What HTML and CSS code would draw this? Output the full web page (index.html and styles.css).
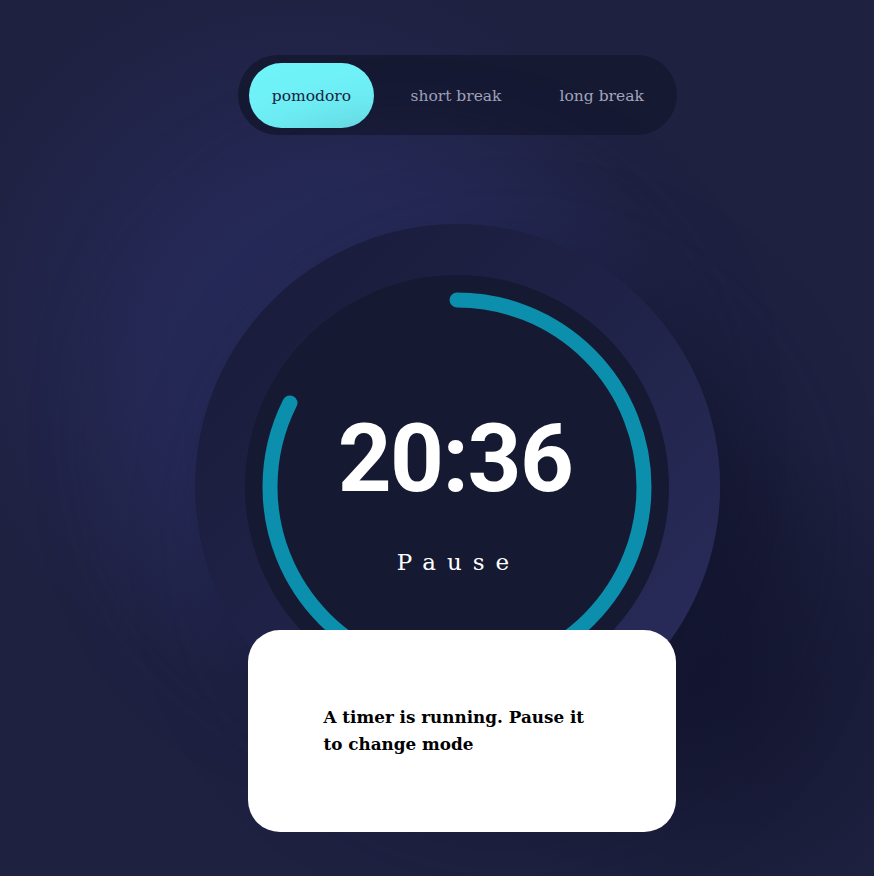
FILE: index.html
```html
<!DOCTYPE html>
<html lang="en">
<head>
<meta charset="utf-8">
<title>pomodoro</title>
<link rel="stylesheet" href="styles.css">
</head>
<body>
<main class="app">
  <nav class="tabs">
    <span class="tab tab-active">pomodoro</span>
    <span class="tab">short break</span>
    <span class="tab">long break</span>
  </nav>
  <section class="timer">
    <div class="timer-inner">
      <svg class="ring" width="424" height="424" viewBox="0 0 424 424">
        <circle cx="212" cy="212" r="187" fill="none" stroke="#0b8fad" stroke-width="15" stroke-linecap="round" stroke-dasharray="968 1175" transform="rotate(-90 212 212)"/>
      </svg>
      <div class="time">20:36</div>
      <div class="action">Pause</div>
    </div>
    <div class="toast">
      <p class="toast-text">A timer is running. Pause it<br>to change mode</p>
    </div>
  </section>
</main>
</body>
</html>
```
FILE: styles.css
```css
html, body {
  margin: 0;
  height: 100%;
}
body {
  background:
    radial-gradient(circle at 34% 37%, rgba(41, 45, 96, 1) 0, rgba(41, 45, 96, 0) 360px),
    radial-gradient(circle at 82% 78%, rgba(20, 22, 48, 1) 0, rgba(20, 22, 48, 0) 260px),
    #1e2140;
  font-family: "DejaVu Serif", serif;
  overflow: hidden;
}
.app {
  display: flex;
  flex-direction: column;
  align-items: center;
  padding-left: 40px;
  padding-top: 55px;
}
.tabs {
  display: flex;
  align-items: center;
  height: 80px;
  box-sizing: border-box;
  width: 439px;
  padding: 0 11px;
  background: #161932;
  border-radius: 40px;
}
.tab {
  display: flex;
  align-items: center;
  justify-content: center;
  font-family: "DejaVu Serif", serif;
  font-size: 15.5px;
  color: #a3a5bd;
  height: 65px;
  border-radius: 33px;
  padding-top: 2px;
  box-sizing: border-box;
  cursor: pointer;
}
.tab:nth-child(1) { width: 126px; }
.tab:nth-child(2) { width: 164px; }
.tab:nth-child(3) { width: 128px; }
.tab-active {
  background: #70f3f8;
  color: #1e213f;
}
.timer {
  position: relative;
  margin-top: 89px;
  width: 525px;
  height: 525px;
  border-radius: 50%;
  background: linear-gradient(135deg, #181a38 0%, #1f2246 45%, #2b2e5e 100%);
  box-shadow: 50px 50px 100px #141630, -50px -50px 100px #262a57;
  display: flex;
  align-items: center;
  justify-content: center;
}
.timer-inner {
  position: relative;
  width: 424px;
  height: 424px;
  border-radius: 50%;
  background: #161932;
  display: flex;
  flex-direction: column;
  align-items: center;
  padding-top: 137px;
  box-sizing: border-box;
}
.ring {
  position: absolute;
  left: 0;
  top: 0;
}
.time {
  position: relative;
  font-family: Roboto, sans-serif;
  font-weight: 700;
  font-size: 94px;
  line-height: 94px;
  color: #ffffff;
  letter-spacing: -1.5px;
  margin-right: 4px;
}
.action {
  position: relative;
  margin-top: 44px;
  font-family: "DejaVu Serif", serif;
  font-size: 23px;
  line-height: 24px;
  letter-spacing: 11px;
  margin-right: -3px;
  color: #ffffff;
}
.toast {
  position: absolute;
  left: 53px;
  top: 406px;
  width: 428px;
  height: 202px;
  background: #ffffff;
  border-radius: 32px;
  display: flex;
  align-items: center;
  padding-left: 76px;
  box-sizing: border-box;
}
.toast-text {
  margin: 0;
  font-family: "DejaVu Serif", serif;
  font-weight: 700;
  font-size: 16.8px;
  line-height: 27px;
  color: #000000;
}
```
